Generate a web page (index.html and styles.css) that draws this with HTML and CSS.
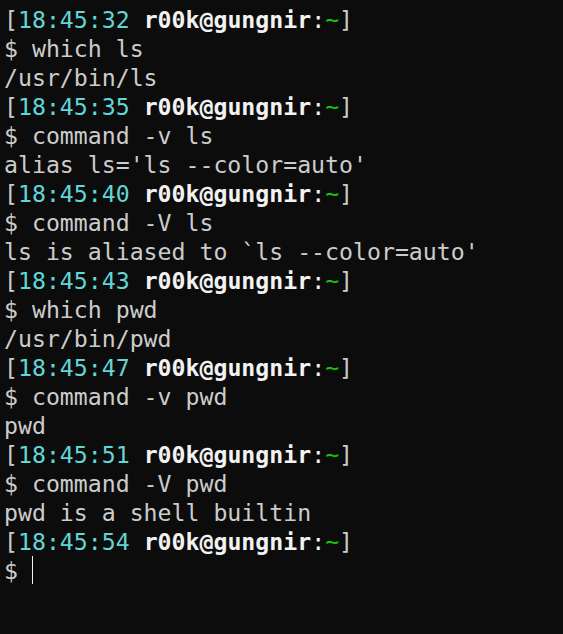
FILE: index.html
```html
<!DOCTYPE html>
<html>
<head>
<meta charset="utf-8">
<link rel="stylesheet" href="styles.css">
</head>
<body>
<div class="term">
<div class="line"><span class="br">[</span><span class="time">18:45:32</span> <span class="host">r00k@gungnir</span><span class="colon">:</span><span class="tilde">~</span><span class="br">]</span></div>
<div class="line">$ which ls</div>
<div class="line">/usr/bin/ls</div>
<div class="line"><span class="br">[</span><span class="time">18:45:35</span> <span class="host">r00k@gungnir</span><span class="colon">:</span><span class="tilde">~</span><span class="br">]</span></div>
<div class="line">$ command -v ls</div>
<div class="line">alias ls='ls --color=auto'</div>
<div class="line"><span class="br">[</span><span class="time">18:45:40</span> <span class="host">r00k@gungnir</span><span class="colon">:</span><span class="tilde">~</span><span class="br">]</span></div>
<div class="line">$ command -V ls</div>
<div class="line">ls is aliased to `ls --color=auto'</div>
<div class="line"><span class="br">[</span><span class="time">18:45:43</span> <span class="host">r00k@gungnir</span><span class="colon">:</span><span class="tilde">~</span><span class="br">]</span></div>
<div class="line">$ which pwd</div>
<div class="line">/usr/bin/pwd</div>
<div class="line"><span class="br">[</span><span class="time">18:45:47</span> <span class="host">r00k@gungnir</span><span class="colon">:</span><span class="tilde">~</span><span class="br">]</span></div>
<div class="line">$ command -v pwd</div>
<div class="line">pwd</div>
<div class="line"><span class="br">[</span><span class="time">18:45:51</span> <span class="host">r00k@gungnir</span><span class="colon">:</span><span class="tilde">~</span><span class="br">]</span></div>
<div class="line">$ command -V pwd</div>
<div class="line">pwd is a shell builtin</div>
<div class="line"><span class="br">[</span><span class="time">18:45:54</span> <span class="host">r00k@gungnir</span><span class="colon">:</span><span class="tilde">~</span><span class="br">]</span></div>
<div class="line">$ <span class="cursor"></span></div>
</div>
</body>
</html>
```
FILE: styles.css
```css
html, body {
  margin: 0;
  padding: 0;
  background: #0c0c0c;
  height: 100%;
}
.term {
  padding: 5px 0 0 4px;
  font-family: "DejaVu Sans Mono", "Liberation Mono", monospace;
  font-size: 23.2px;
  color: #cccccc;
}
.line {
  height: 29px;
  line-height: 29px;
  white-space: pre;
}
.time {
  color: #61d6d6;
}
.host {
  color: #f2f2f2;
  font-weight: bold;
}
.colon {
  color: #f2f2f2;
}
.tilde {
  color: #16c60c;
}
.cursor {
  display: inline-block;
  width: 1px;
  height: 28px;
  background: #f2f2f2;
  vertical-align: top;
}
```
